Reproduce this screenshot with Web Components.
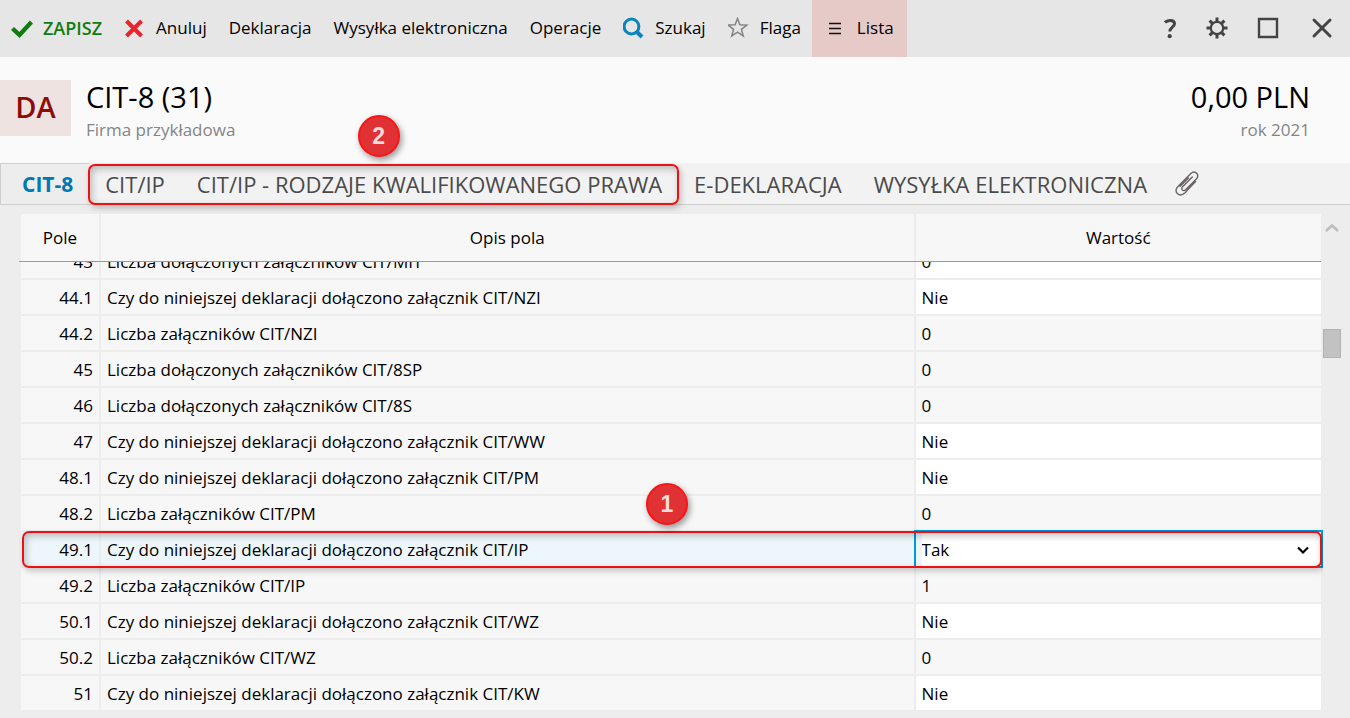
<!DOCTYPE html>
<html lang="pl">
<head>
<meta charset="utf-8">
<title>CIT-8 (31)</title>
<style>
  html, body { margin: 0; height: 100%; }
  body { font: 17px/24px "Open Sans", "Noto Sans", sans-serif; color: #000; background: #ededed; }
</style>
</head>
<body>
<declaration-window></declaration-window>

<script>
const define = (name, html, init) => {
  const template = document.createElement('template');
  template.innerHTML = html;
  customElements.define(name, class extends HTMLElement {
    constructor() {
      super();
      this.attachShadow({ mode: 'open' }).append(template.content.cloneNode(true));
    }
    connectedCallback() { if (init) init(this, this.shadowRoot); }
  });
};

/* Toolbar command: optional icon + caption */
define('tool-button', `
<style>
  :host { display: flex; }
  button { display: flex; align-items: center; gap: 10px; padding: 0 11px 2px; border: 0; background: none;
    font: inherit; color: inherit; white-space: nowrap; }
  ::slotted(svg) { width: 22px; height: 22px; flex: none; }
  :host([primary]) button { color: #107c10; font-size: 18px; font-weight: 600; }
  :host([active]) button { background: #e6cac7; padding: 0 13px 2px; }
</style>
<button type="button"><slot name="icon"></slot><slot></slot></button>`,
(host, root) => {
  const label = host.getAttribute('label');
  if (label) root.querySelector('button').setAttribute('aria-label', label);
});

/* Numbered red frame put round its content, or over its positioned parent */
define('callout-frame', `
<style>
  :host { position: relative; display: flex; }
  :host([overlay]) { position: absolute; z-index: 1; inset: 1px 1px -2px 3px; pointer-events: none; }
  .frame { position: absolute; inset: 1px -1px -1px -1px; border: 2px solid #ee1111; border-radius: 7px;
    box-sizing: border-box; pointer-events: none;
    box-shadow: 2px 3px 6px rgba(0,0,0,.22), inset 2px 3px 7px rgba(0,0,0,.24); }
  :host([overlay]) .frame { inset: 0; }
  .badge { position: absolute; left: calc(50% - 26px); bottom: calc(100% + 6px); width: 42px; height: 42px;
    box-sizing: border-box; border: 2px solid #fa1515; border-radius: 50%; background: #e03134;
    color: #fbdcdc; font: 700 23px/38px "Liberation Sans", sans-serif; text-align: center;
    box-shadow: 2px 3px 6px rgba(0,0,0,.4); z-index: 4; }
</style>
<slot></slot><span class="frame"></span><span class="badge"></span>`,
(host, root) => { root.querySelector('.badge').textContent = host.getAttribute('number'); });

define('window-toolbar', `
<style>
  :host { display: flex; justify-content: space-between; height: 57px; background: #e6e6e6; }
  nav, .controls { display: flex; }
  .controls { color: #444; gap: 3px; padding-right: 6px; }
  .maximize { padding-left: 4px; }
  .close { padding-left: 7px; }
</style>
<nav aria-label="Polecenia">
  <tool-button primary><svg slot="icon" viewBox="0 0 22 22"><path d="M1.500 11.500 8.500 18 20.500 5" fill="none" stroke="#107c10" stroke-width="4.400"/></svg>ZAPISZ</tool-button>
  <tool-button><svg slot="icon" viewBox="0 0 22 22"><path d="M2.500 4 17.500 19M17.500 4 2.500 19" fill="none" stroke="#e8232b" stroke-width="4"/></svg>Anuluj</tool-button>
  <tool-button>Deklaracja</tool-button>
  <tool-button>Wysyłka elektroniczna</tool-button>
  <tool-button>Operacje</tool-button>
  <tool-button><svg slot="icon" viewBox="0 0 22 22" fill="none" stroke="#0a84bd"><circle cx="8.500" cy="9.500" r="7.400" stroke-width="3"/><path d="M13.500 14.500 19 20" stroke-width="4"/></svg>Szukaj</tool-button>
  <tool-button><svg slot="icon" viewBox="0 0 22 22"><path d="M9.500 1.500 11.900 7.800 18.800 8.100 13.400 12.300 15.300 19 9.500 15.200 3.700 19 5.600 12.300 .2 8.100 7.100 7.800Z" fill="none" stroke="#858585" stroke-width="1.500"/></svg>Flaga</tool-button>
  <tool-button active><svg slot="icon" viewBox="0 0 22 22"><path d="M4 6.500H16M4 11.500H16M4 16.500H16" stroke="#111" stroke-width="1.600"/></svg>Lista</tool-button>
</nav>
<div class="controls">
  <tool-button label="Pomoc"><svg slot="icon" viewBox="0 0 22 22"><path d="M6 5.500C8 3 15.500 2 15.500 6.700 15.500 10.200 10.800 10 10.800 14.600" fill="none" stroke="#444" stroke-width="3"/><circle cx="10.700" cy="19.200" r="2.100" fill="#444"/></svg></tool-button>
  <tool-button label="Ustawienia"><svg slot="icon" viewBox="0 0 22 22" fill="none" stroke="#444"><circle cx="11" cy="11" r="6.200" stroke-width="2.200"/><path d="M11 .5V4.500M11 17.500V21.500M.5 11H4.500M17.500 11H21.500M3.600 3.600 6.400 6.400M15.600 15.600 18.400 18.400M3.600 18.400 6.400 15.600M15.600 6.400 18.400 3.600" stroke-width="3"/></svg></tool-button>
  <tool-button class="maximize" label="Maksymalizuj"><svg slot="icon" viewBox="0 0 22 22"><path d="M2 2H20V20H2Z" fill="none" stroke="#444" stroke-width="2.400"/></svg></tool-button>
  <tool-button class="close" label="Zamknij"><svg slot="icon" viewBox="0 0 22 22"><path d="M3 3 19 19M19 3 3 19" stroke="#444" stroke-width="3" stroke-linecap="round"/></svg></tool-button>
</div>`);

define('record-header', `
<style>
  :host { display: flex; align-items: flex-start; gap: 15px; height: 106px; padding: 23px 40px 0 0;
    box-sizing: border-box; background: #fafafa; }
  .mark { width: 71px; height: 56px; background: #efe3e1; color: #8c0d08; font-size: 29px; font-weight: 600;
    line-height: 54px; text-align: center; }
  .title { flex: 1; }
  h1, .amount { margin: 0; font-size: 29px; font-weight: 400; line-height: 34px; }
  .sum { text-align: right; }
  p { margin: 4px 0 0; color: #858585; }
</style>
<div class="mark">DA</div>
<div class="title"><h1>CIT-8 (31)</h1><p>Firma przykładowa</p></div>
<div class="sum"><div class="amount">0,00 PLN</div><p>rok 2021</p></div>`);

define('tab-link', `
<style>
  :host { display: flex; }
  a { padding: 0 16px; color: #4a4a4a; text-decoration: none; font-size: 22px; line-height: 42px; white-space: nowrap; }
  :host([selected]) { background: #ededed; border: solid #cfcfcf; border-width: 1px 0 0 1px; }
  :host([selected]) a { color: #0078b0; font-weight: 700; font-size: 21px; line-height: 40px; padding-left: 21px; }
</style>
<a href="#"><slot></slot></a>`);

define('tab-bar', `
<style>
  :host { display: flex; height: 42px; background: #f2f2f2; box-sizing: border-box; border-bottom: 1px solid #cfcfcf; }
  button { border: 0; background: none; padding: 0 11px; display: flex; align-items: center; }
  svg { width: 26px; height: 28px; }
</style>
<tab-link selected>CIT-8</tab-link>
<callout-frame number="2">
  <tab-link>CIT/IP</tab-link>
  <tab-link>CIT/IP - RODZAJE KWALIFIKOWANEGO PRAWA</tab-link>
</callout-frame>
<tab-link>E-DEKLARACJA</tab-link>
<tab-link>WYSYŁKA ELEKTRONICZNA</tab-link>
<button type="button" aria-label="Załączniki"><svg viewBox="0 0 26 28"><path d="M21.500 11.500 11 22.700C9 24.600 6.300 26 3.500 23.800 1.200 21.500 1.800 18.800 3.800 16.800L16.800 3.600C18.800 1.700 21.200 1.800 22.700 3.300 24.200 4.800 24.200 7.200 22.400 9L11.600 19.800C10.600 20.900 9.200 20.800 8.400 20 7.500 19.200 7.500 17.900 8.600 16.800L18.300 7.100M14.500 8 6.200 16.300" fill="none" stroke="#6a6464" stroke-width="1.400" stroke-linecap="round"/></svg></button>`);

define('field-table', `
<style>
  :host { display: block; overflow: auto; scrollbar-width: none; flex: 1; min-width: 0; }
  table { width: 100%; table-layout: fixed; border-collapse: separate; border-spacing: 0; }
  .number { width: 80px; }
  .value { width: 31.400%; }
  th, td { box-sizing: border-box; border: 0 solid #ededed; border-left-width: 2px;
    background: #f7f7f7; background-clip: padding-box; font-weight: 400; white-space: nowrap; }
  th { position: sticky; top: 0; z-index: 2; height: 48px; padding: 0; }
  th::after { content: ""; position: absolute; left: -2px; right: 0; bottom: 0; height: 1px; background: #9a9a9a; }
  td { height: 36px; padding: 2px 6px 0; border-top-width: 2px; }
  th:last-child, td:last-child { border-right-width: 2px; }
  td:first-child { text-align: right; }
  td.editable { background-color: #fff; }
  tr { position: relative; }
  .current { z-index: 1; }
  .current td { background-color: #edf6fa; }
  .current td:last-child { padding: 0; border-color: #0099dd; box-shadow: 0 2px #0099dd; }
  .pick { position: relative; display: flex; background: #fff; }
  select { flex: 1; appearance: none; border: 0; border-left: 6px solid #edf6fa; padding: 2px 0 0; margin: 0; height: 34px;
    background: #fff; font: inherit; color: inherit; }
  .pick svg { position: absolute; right: 12px; top: 12px; width: 12px; height: 12px; pointer-events: none; }
</style>
<table>
  <colgroup><col class="number"><col><col class="value"></colgroup>
  <thead><tr><th scope="col">Pole</th><th scope="col">Opis pola</th><th scope="col">Wartość</th></tr></thead>
  <tbody></tbody>
</table>`,
(host, root) => {
  const ask = 'Czy do niniejszej deklaracji dołączono załącznik ';
  const rows = [
    ['43', 'Liczba dołączonych załączników CIT/MIT', '0', 1],
    ['44.1', ask + 'CIT/NZI', 'Nie', 1],
    ['44.2', 'Liczba załączników CIT/NZI', '0'],
    ['45', 'Liczba dołączonych załączników CIT/8SP', '0'],
    ['46', 'Liczba dołączonych załączników CIT/8S', '0'],
    ['47', ask + 'CIT/WW', 'Nie', 1],
    ['48.1', ask + 'CIT/PM', 'Nie', 1],
    ['48.2', 'Liczba załączników CIT/PM', '0'],
    ['49.1', ask + 'CIT/IP', 'Tak', 2],
    ['49.2', 'Liczba załączników CIT/IP', '1'],
    ['50.1', ask + 'CIT/WZ', 'Nie', 1],
    ['50.2', 'Liczba załączników CIT/WZ', '0'],
    ['51', ask + 'CIT/KW', 'Nie', 1]
  ];
  root.querySelector('tbody').innerHTML = rows.map(([no, text, value, kind]) => kind === 2
    ? `<tr class="current"><td>${no}<callout-frame overlay number="1"></callout-frame></td><td id="question">${text}</td>
       <td><div class="pick"><select aria-labelledby="question"><option>${value}</option></select>
       <svg viewBox="0 0 12 12"><path d="M1 3.500 6 8.500 11 3.500" fill="none" stroke="#000" stroke-width="2.200"/></svg></div></td></tr>`
    : `<tr><td>${no}</td><td>${text}</td><td class="${kind ? 'editable' : ''}">${value}</td></tr>`).join('');
  host.scrollTop = host.scrollHeight;
});

define('scroll-track', `
<style>
  :host { display: flex; flex-direction: column; align-items: center; width: 18px; }
  svg { width: 14px; height: 10px; margin: 9px 0 0; flex: none; }
  .space { flex: 20; }
  .thumb { width: 18px; height: 29px; background: #c2c2c2; box-shadow: inset 0 0 0 1px #b2b2b2; flex: none; }
  .rest { flex: 73; }
</style>
<svg viewBox="0 0 14 10"><path d="M1 8 7 2.500 13 8" fill="none" stroke="#bdbdbd" stroke-width="2.600"/></svg>
<div class="space"></div><div class="thumb"></div><div class="rest"></div>`);

define('declaration-window', `
<style>
  :host { display: flex; flex-direction: column; height: 100vh; box-sizing: border-box; }
  window-toolbar, record-header, tab-bar { flex: none; }
  tab-bar { position: relative; }
  main { flex: 1; min-height: 0; display: flex; padding: 9px 9px 8px 19px; }
</style>
<window-toolbar></window-toolbar>
<record-header></record-header>
<tab-bar></tab-bar>
<main><field-table></field-table><scroll-track></scroll-track></main>`);
</script>
</body>
</html>
